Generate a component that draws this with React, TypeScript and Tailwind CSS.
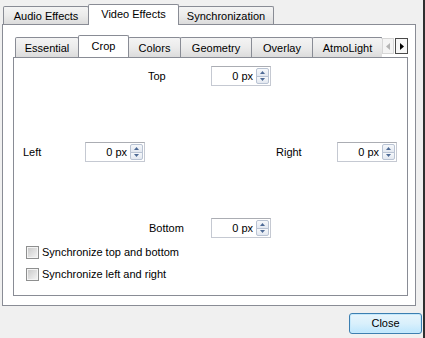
import React from "react";

type TabProps = { label: string; w: number; selected?: boolean; inner?: boolean; first?: boolean };

function Tab({ label, w, selected, inner, first }: TabProps) {
  const base = "flex shrink-0 items-center justify-center border border-b-0 border-[#898c95] rounded-t-[2px] whitespace-nowrap";
  const size = inner
    ? selected
      ? "h-[23px] pb-[2px]"
      : "h-[20px] pt-[1px]"
    : selected
      ? "h-[21px] pb-[1px]"
      : "h-[18px] pt-[2px]";
  const look = selected
    ? "relative z-10 -mb-px bg-white"
    : "bg-linear-to-b from-[#f4f4f4] via-[#ebebeb] to-[#dcdcdc]";
  return (
    <div className={`${base} ${size} ${look} ${first ? "" : "-ml-px"}`} style={{ width: w }}>
      {label}
    </div>
  );
}

function SpinBox() {
  return (
    <div className="flex h-[20px] w-[60px] items-stretch border border-[#c5c9d2] border-t-[#abadb3] bg-white">
      <div className="flex flex-1 items-center justify-end pr-[3px]">0 px</div>
      <div className="my-px mr-px flex w-[13px] flex-col">
        <div className="flex flex-1 items-center justify-center rounded-t-[2px] border border-[#b9c3d3] bg-linear-to-b from-[#f6f8fb] to-[#e3e8f0]">
          <svg width="5" height="3" viewBox="0 0 5 3">
            <path d="M0 3 L2.5 0 L5 3 Z" fill="#4e6a95" />
          </svg>
        </div>
        <div className="-mt-px flex flex-1 items-center justify-center rounded-b-[2px] border border-[#b9c3d3] bg-linear-to-b from-[#f6f8fb] to-[#e3e8f0]">
          <svg width="5" height="3" viewBox="0 0 5 3">
            <path d="M0 0 L2.5 3 L5 0 Z" fill="#4e6a95" />
          </svg>
        </div>
      </div>
    </div>
  );
}

function CheckRow({ label }: { label: string }) {
  return (
    <div className="flex h-[16px] items-center">
      <div className="ml-[12px] flex h-[13px] w-[13px] items-center justify-center border border-[#8e8f8f] bg-[#f4f4f4]">
        <div className="h-[9px] w-[9px] bg-linear-to-br from-[#cbcbcb] to-[#f2f2f2]" />
      </div>
      <span className="ml-[3px]">{label}</span>
    </div>
  );
}

export default function App() {
  return (
    <div className="h-[338px] w-[425px] overflow-hidden border-r-2 border-[#2f2f2f] bg-[#f0f0f0] font-['Liberation_Sans',Arial,sans-serif] text-[11px] leading-none text-black">
      <div className="ml-[2px] w-[414px] pt-[4px]">
        {/* outer tab bar */}
        <div className="flex h-[20px] items-end pl-[1px]">
          <Tab label="Audio Effects" w={86} first />
          <Tab label="Video Effects" w={91} selected />
          <Tab label="Synchronization" w={96} />
        </div>

        {/* outer pane */}
        <div className="h-[282px] border border-[#898c95] bg-white pl-[10px] pt-[10px]">
          <div className="w-[395px]">
            <div className="flex h-[22px] items-end">
              <div className="flex flex-1 items-end overflow-hidden pl-[2px]">
                <Tab label="Essential" w={64} inner first />
                <Tab label="Crop" w={51} inner selected />
                <Tab label="Colors" w={53} inner />
                <Tab label="Geometry" w={72} inner />
                <Tab label="Overlay" w={62} inner />
                <Tab label="AtmoLight" w={71} inner />
              </div>
              <div className="flex self-start pt-[3px]">
                <div className="flex h-[16px] w-[12px] items-center justify-center border border-[#d6d6d6] bg-[#f4f4f4]">
                  <svg width="4" height="7" viewBox="0 0 4 7">
                    <path d="M4 0 L0 3.5 L4 7 Z" fill="#b4b4b4" />
                  </svg>
                </div>
                <div className="ml-[1px] flex h-[16px] w-[13px] items-center justify-center border border-[#4a4a4a] bg-[#f7f7f7]">
                  <svg width="4" height="7" viewBox="0 0 4 7">
                    <path d="M0 0 L4 3.5 L0 7 Z" fill="#000" />
                  </svg>
                </div>
              </div>
            </div>

            {/* inner pane */}
            <div className="h-[239px] border border-[#898c95] bg-white pt-[8px]">
              <div className="ml-[9px] grid grid-cols-[62px_63px_63px_65px_61px_60px] grid-rows-[20px_20px_20px] gap-y-[56px]">
                <div className="col-start-3 row-start-1 flex items-center">Top</div>
                <div className="col-start-4 row-start-1">
                  <SpinBox />
                </div>

                <div className="col-start-1 row-start-2 flex items-center">Left</div>
                <div className="col-start-2 row-start-2">
                  <SpinBox />
                </div>
                <div className="col-start-5 row-start-2 flex items-center">Right</div>
                <div className="col-start-6 row-start-2">
                  <SpinBox />
                </div>

                <div className="col-start-3 row-start-3 flex items-center pl-px">Bottom</div>
                <div className="col-start-4 row-start-3">
                  <SpinBox />
                </div>
              </div>

              <div className="mt-[6px] flex flex-col gap-[6px]">
                <CheckRow label="Synchronize top and bottom" />
                <CheckRow label="Synchronize left and right" />
              </div>
            </div>
          </div>
        </div>

        {/* buttons */}
        <div className="mt-[7px] flex justify-end">
          <button
            type="button"
            className="-mr-[6px] flex h-[21px] w-[73px] items-center justify-center rounded-[3px] border border-[#3c7fb1] bg-linear-to-b from-[#e8f5fc] via-[#d9f0fc] to-[#bde6fd] shadow-[inset_0_0_0_1px_#c6e9fc]"
          >
            Close
          </button>
        </div>
      </div>
    </div>
  );
}
